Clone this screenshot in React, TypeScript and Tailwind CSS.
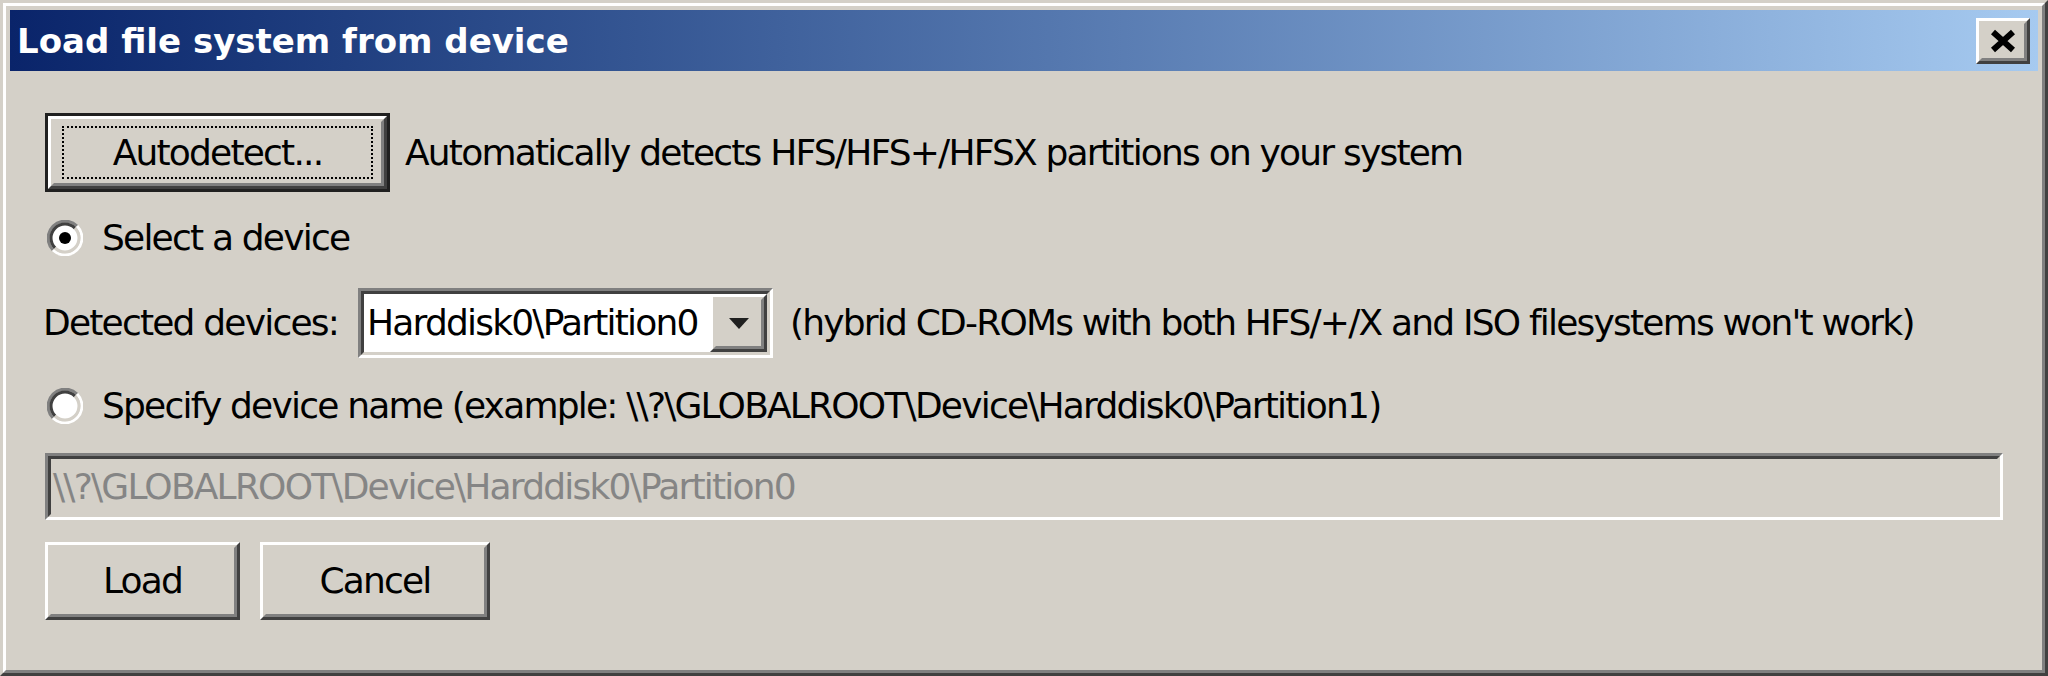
import React from 'react';

// classic 3D edges, scaled up about 3x
const raisedOuter = 'border-[3px] border-t-white border-l-white border-r-[#404040] border-b-[#404040]';
const raisedInner = 'border-[3px] border-t-[#d4d0c8] border-l-[#d4d0c8] border-r-[#808080] border-b-[#808080]';
const sunkenOuter = 'border-[3px] border-t-[#808080] border-l-[#808080] border-r-white border-b-white';
const sunkenInner = 'border-[3px] border-t-[#404040] border-l-[#404040] border-r-[#d4d0c8] border-b-[#d4d0c8]';

const Button = ({ label, className }: { label: string; className: string }) => (
  <div className={`${raisedOuter} ${className} bg-[#d4d0c8]`}>
    <div className={`${raisedInner} w-full h-full flex items-center justify-center`}>
      <span className="text-[36px] leading-none tracking-[-0.05em]">{label}</span>
    </div>
  </div>
);

const Radio = ({ checked }: { checked?: boolean }) => (
  <svg width="36" height="36" viewBox="0 0 36 36" className="shrink-0">
    <circle cx="18" cy="18" r="13" fill="#ffffff" />
    <path d="M5.98 30.02 A17 17 0 0 1 30.02 5.98" fill="none" stroke="#808080" strokeWidth="3" />
    <path d="M30.02 5.98 A17 17 0 0 1 5.98 30.02" fill="none" stroke="#ffffff" strokeWidth="3" />
    <path d="M8.1 27.9 A14 14 0 0 1 27.9 8.1" fill="none" stroke="#404040" strokeWidth="3" />
    <path d="M27.9 8.1 A14 14 0 0 1 8.1 27.9" fill="none" stroke="#d4d0c8" strokeWidth="3" />
    {checked && <circle cx="18" cy="18" r="6" fill="#000000" />}
  </svg>
);

export default function App() {
  return (
    <div className="w-[2048px] h-[676px] bg-[#d4d0c8] font-['DejaVu_Sans',sans-serif] text-black">
      <div className="w-full h-full border-[3px] border-t-[#d4d0c8] border-l-[#d4d0c8] border-r-[#404040] border-b-[#404040]">
        <div className="w-full h-full border-[3px] border-t-white border-l-white border-r-[#808080] border-b-[#808080] p-[4px]">
          {/* title bar */}
          <div className="h-[61px] flex items-center justify-between bg-linear-to-r from-[#0a246a] to-[#a6caf0] pl-[7px] pr-[8px]">
            <span className="text-white font-bold text-[34px] leading-none">Load file system from device</span>
            <div className={`${raisedOuter} w-[54px] h-[46px] bg-[#d4d0c8]`}>
              <div className={`${raisedInner} w-full h-full flex items-center justify-center`}>
                <svg width="26" height="24" viewBox="0 0 26 24">
                  <path d="M3 3 L23 21 M23 3 L3 21" stroke="#000000" strokeWidth="6" />
                </svg>
              </div>
            </div>
          </div>

          <div className="pl-[35px] pt-[42px] text-[36px] leading-none tracking-[-0.05em]">
            <div className="flex items-center h-[79px]">
              <div className="w-[345px] h-[79px] border-[3px] border-[#202020] bg-[#d4d0c8]">
                <div className={`${raisedOuter} w-full h-full`}>
                  <div className={`${raisedInner} w-full h-full px-[8px] py-[4px]`}>
                    <div className="w-full h-full border-2 border-dotted border-black flex items-center justify-center">
                      Autodetect...
                    </div>
                  </div>
                </div>
              </div>
              <span className="ml-[15px]">Automatically detects HFS/HFS+/HFSX partitions on your system</span>
            </div>

            <div className="mt-[26px] h-[40px] flex items-center">
              <div className="ml-[2px]"><Radio checked /></div>
              <span className="ml-[19px]">Select a device</span>
            </div>

            <div className="mt-[30px] h-[70px] flex items-center">
              <span className="-ml-[2px] w-[315px]">Detected devices:</span>
              <div className={`${sunkenOuter} w-[415px] h-full bg-white`}>
                <div className={`${sunkenInner} w-full h-full flex items-center`}>
                  <span className="flex-1 pl-[3px]">Harddisk0\Partition0</span>
                  <div className={`${raisedOuter} w-[57px] h-full bg-[#d4d0c8]`}>
                    <div className={`${raisedInner} w-full h-full flex items-center justify-center`}>
                      <svg width="20" height="11" viewBox="0 0 20 11">
                        <path d="M0 0 H20 L10 11 Z" fill="#202020" />
                      </svg>
                    </div>
                  </div>
                </div>
              </div>
              <span className="ml-[17px]">(hybrid CD-ROMs with both HFS/+/X and ISO filesystems won't work)</span>
            </div>

            <div className="mt-[28px] h-[40px] flex items-center">
              <div className="ml-[2px]"><Radio /></div>
              <span className="ml-[19px]">{'Specify device name (example: \\\\?\\GLOBALROOT\\Device\\Harddisk0\\Partition1)'}</span>
            </div>

            <div className={`${sunkenOuter} mt-[27px] w-[1958px] h-[67px] bg-[#d4d0c8]`}>
              <div className={`${sunkenInner} w-full h-full flex items-center pl-[2px] text-[#858585]`}>
                {'\\\\?\\GLOBALROOT\\Device\\Harddisk0\\Partition0'}
              </div>
            </div>

            <div className="mt-[22px] flex gap-[20px]">
              <Button label="Load" className="w-[195px] h-[78px]" />
              <Button label="Cancel" className="w-[230px] h-[78px]" />
            </div>
          </div>
        </div>
      </div>
    </div>
  );
}
